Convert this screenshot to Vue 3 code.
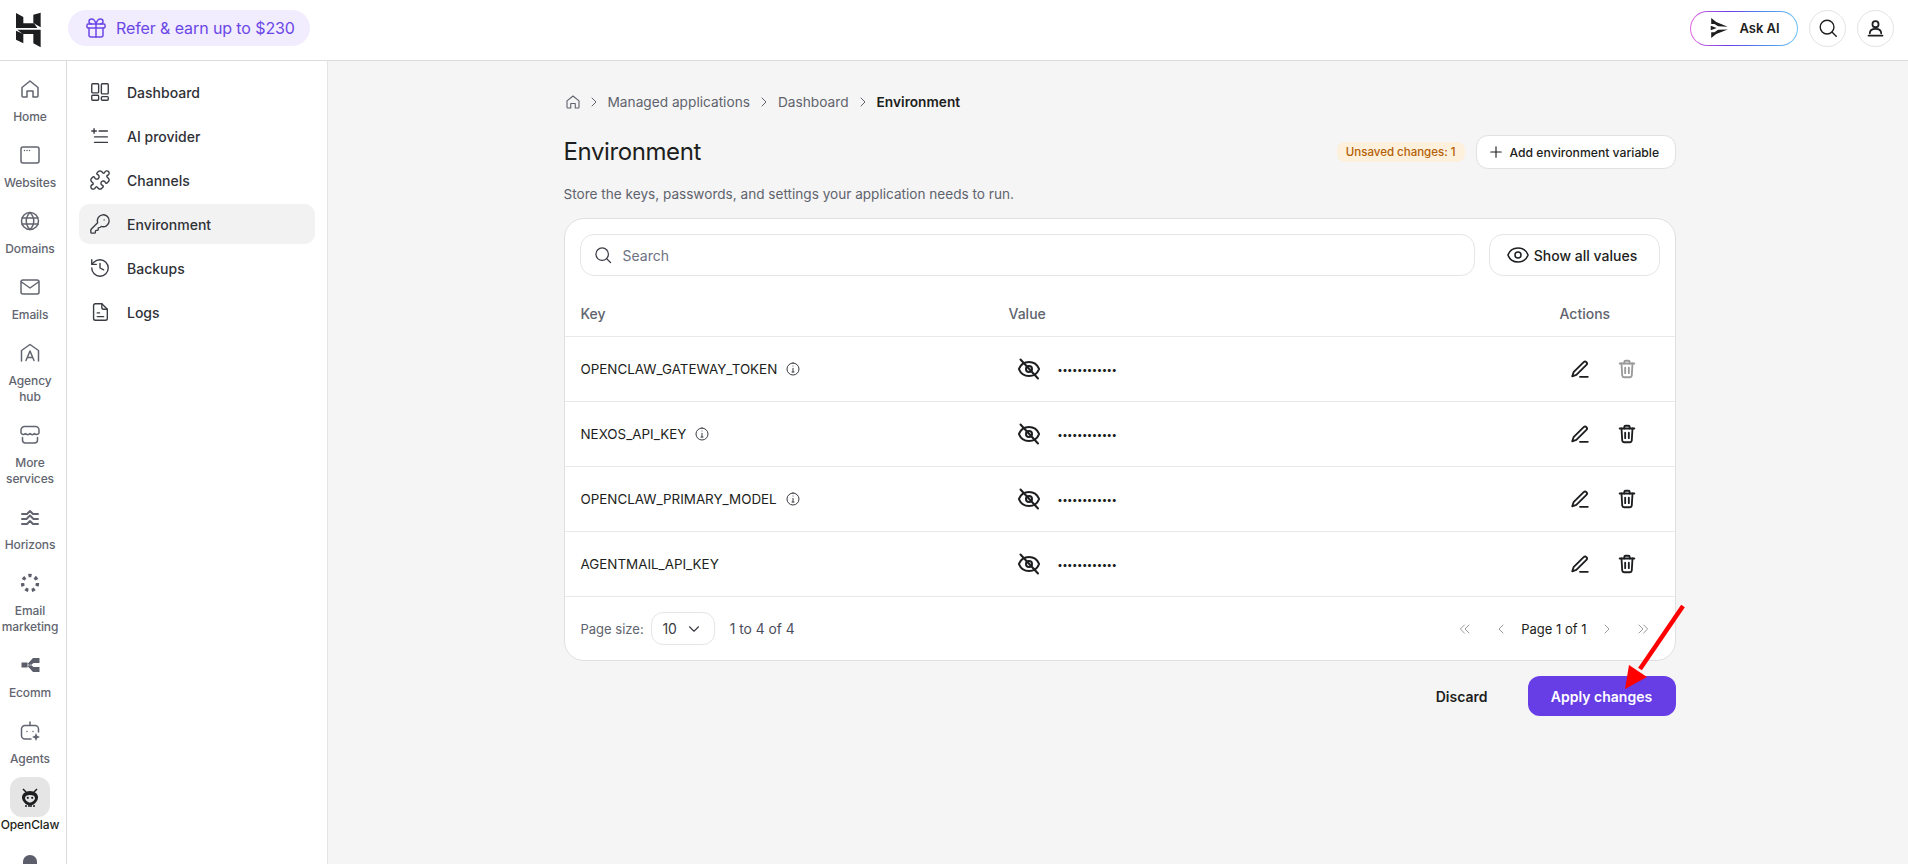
<script setup>
import { ref } from 'vue';

// icon shapes, all on a 24 box
const icons = {
  home: ['M4 10.5 12 4l8 6.5V19a1 1 0 0 1-1 1h-4v-6H9v6H5a1 1 0 0 1-1-1z'],
  websites: ['M5 4h14a2 2 0 0 1 2 2v12a2 2 0 0 1-2 2H5a2 2 0 0 1-2-2V6a2 2 0 0 1 2-2z', 'M6.5 7.5h.01M9 7.5h.01M11.5 7.5h.01'],
  domains: ['M12 3.5a8.5 8.5 0 1 0 0 17 8.5 8.5 0 0 0 0-17z', 'M12 3.5c-5 5-5 12 0 17c5-5 5-12 0-17z', 'M4 9h16M4 15h16'],
  emails: ['M5 5h14a2 2 0 0 1 2 2v10a2 2 0 0 1-2 2H5a2 2 0 0 1-2-2V7a2 2 0 0 1 2-2z', 'm3.5 7 8.5 6 8.5-6'],
  agency: ['M3.5 20V9.5L12 3.5l8.500 6V20', 'M8 19.5 12 10l4 9.500M9.500 16.500h5'],
  services: ['M6.500 3.500h11a3.500 3.500 0 0 1 3.500 3.500v3c-1 2-3.500 2-4.500.5-1 1.500-3.500 1.500-4.500 0-1 1.500-3.500 1.500-4.500 0C6.500 12 4 12 3 10V7a3.500 3.500 0 0 1 3.500-3.500z', 'M4.500 14.500V17a3 3 0 0 0 3 3h9a3 3 0 0 0 3-3v-2.500'],
  horizons: ['M4 9h5l3-3 3 3h5', 'M4 14h4.500l3.500-3.500 3.500 3.500H20', 'M4 19h5l3-3 3 3h5'],
  agents: ['M7 6.500h10a3.500 3.500 0 0 1 3.500 3.500v3M13 20H7a3.500 3.500 0 0 1-3.500-3.500V10A3.500 3.500 0 0 1 7 6.500', 'M12 6.500V3', 'M9 12.500h.01M15 12.500h.01'],
  dashboard: ['M4 3h5.500a1 1 0 0 1 1 1v8a1 1 0 0 1-1 1H4a1 1 0 0 1-1-1V4a1 1 0 0 1 1-1z', 'M14.500 3H20a1 1 0 0 1 1 1v9a1 1 0 0 1-1 1h-5.500a1 1 0 0 1-1-1V4a1 1 0 0 1 1-1z', 'M4 15.500h5.500a1 1 0 0 1 1 1V20a1 1 0 0 1-1 1H4a1 1 0 0 1-1-1v-3.500a1 1 0 0 1 1-1z', 'M14.500 17H20a1 1 0 0 1 1 1v2a1 1 0 0 1-1 1h-5.500a1 1 0 0 1-1-1v-2a1 1 0 0 1 1-1z'],
  provider: ['M3 6.500h5M5.500 4v5', 'M11 6.500h9M6 13h14M6 19h14'],
  channels: ['M19.439 7.85c-.049.322.059.648.289.878l1.568 1.568c.47.47.706 1.087.706 1.704s-.235 1.233-.706 1.704l-1.611 1.611a.98.98 0 0 1-.837.276c-.47-.07-.802-.48-.968-.925a2.501 2.501 0 1 0-3.214 3.214c.446.166.855.497.925.968a.979.979 0 0 1-.276.837l-1.61 1.61a2.404 2.404 0 0 1-1.705.707 2.402 2.402 0 0 1-1.704-.706l-1.568-1.568a1.026 1.026 0 0 0-.877-.29c-.493.074-.84.504-1.02.968a2.5 2.5 0 1 1-3.237-3.237c.464-.18.894-.527.967-1.02a1.026 1.026 0 0 0-.289-.877l-1.568-1.568A2.402 2.402 0 0 1 1.998 12c0-.617.236-1.234.706-1.704L4.23 8.77c.24-.24.581-.353.917-.303.515.077.877.528 1.073 1.01a2.5 2.5 0 1 0 3.259-3.259c-.482-.196-.933-.558-1.01-1.073-.05-.336.062-.676.303-.917l1.525-1.525A2.402 2.402 0 0 1 12 1.998c.617 0 1.234.236 1.704.706l1.568 1.568c.23.23.556.338.877.29.493-.074.84-.504 1.02-.968a2.5 2.5 0 1 1 3.237 3.237c-.464.18-.894.527-.967 1.02Z'],
  key: ['M2.586 17.414A2 2 0 0 0 2 18.828V21a1 1 0 0 0 1 1h3a1 1 0 0 0 1-1v-1a1 1 0 0 1 1-1h1a1 1 0 0 0 1-1v-1a1 1 0 0 1 1-1h.172a2 2 0 0 0 1.414-.586l.814-.814a6.5 6.5 0 1 0-4-4z', 'M16.500 7.500h.01'],
  backups: ['M3 12a9 9 0 1 0 9-9 9.750 9.750 0 0 0-6.740 2.740L3 8', 'M3 3v5h5', 'M12 7v5l4 2'],
  logs: ['M7 3h7l6 6v10a2 2 0 0 1-2 2H7a2 2 0 0 1-2-2V5a2 2 0 0 1 2-2z', 'M14 3v4a2 2 0 0 0 2 2h4', 'M9 13h2.500M9 17h7'],
  gift: ['M4 8h16a1 1 0 0 1 1 1v2a1 1 0 0 1-1 1H4a1 1 0 0 1-1-1V9a1 1 0 0 1 1-1z', 'M12 8v13', 'M19 12v7a2 2 0 0 1-2 2H7a2 2 0 0 1-2-2v-7', 'M7.500 8a2.500 2.500 0 0 1 0-5A4.800 8 0 0 1 12 8a4.800 8 0 0 1 4.500-5 2.500 2.500 0 0 1 0 5'],
  search: ['M11 3.500a7.500 7.500 0 1 0 0 15 7.500 7.500 0 0 0 0-15z', 'm21 21-4.700-4.700'],
  user: ['M12 3.500a3.500 3.500 0 1 0 0 7 3.500 3.500 0 0 0 0-7z', 'M5.500 17.500c0-3.500 3-5 6.500-5s6.500 1.500 6.500 5', 'M4 20h16'],
  plus: ['M12 5v14M5 12h14'],
  eye: ['M2.062 12.348a1 1 0 0 1 0-.696 10.750 10.750 0 0 1 19.876 0 1 1 0 0 1 0 .696 10.750 10.750 0 0 1-19.876 0', 'M12 9a3 3 0 1 0 0 6 3 3 0 0 0 0-6z'],
  eyeOff: ['M2.062 12.348a1 1 0 0 1 0-.696 10.750 10.750 0 0 1 19.876 0 1 1 0 0 1 0 .696 10.750 10.750 0 0 1-19.876 0', 'M12 9a3 3 0 1 0 0 6 3 3 0 0 0 0-6z', 'M3.500 2.500l17.500 19'],
  pencil: ['M16 4.500a2.100 2.100 0 0 1 3 3L8 18.500l-4.500 1.500 1.500-4.500z', 'M12 20.500h8.500'],
  trash: ['M4 6h16', 'M9 6V4.500A1.500 1.500 0 0 1 10.500 3h3A1.500 1.500 0 0 1 15 4.500V6', 'M6 6l.8 13.200A2 2 0 0 0 8.800 21h6.400a2 2 0 0 0 2-1.800L18 6', 'M10 10.500v6M14 10.500v6'],
  info: ['M12 3a9 9 0 1 0 0 18 9 9 0 0 0 0-18z', 'M12 11v5.500M10.500 16.500h3M12 7.500h.01'],
  chevronDown: ['m6 9 6 6 6-6'],
  chevronRight: ['m9 6 6 6-6 6'],
  chevronLeft: ['m15 6-6 6 6 6'],
  doubleLeft: ['m11 6-6 6 6 6', 'm18 6-6 6 6 6'],
  doubleRight: ['m6 6 6 6-6 6', 'm13 6 6 6-6 6'],
};

const railItems = [
  { label: 'Home', icon: 'home' },
  { label: 'Websites', icon: 'websites' },
  { label: 'Domains', icon: 'domains' },
  { label: 'Emails', icon: 'emails' },
  { label: 'Agency\nhub', icon: 'agency' },
  { label: 'More\nservices', icon: 'services' },
  { label: 'Horizons', icon: 'horizons' },
  { label: 'Email\nmarketing', icon: 'marketing' },
  { label: 'Ecomm', icon: 'ecomm' },
  { label: 'Agents', icon: 'agents' },
  { label: 'OpenClaw', icon: 'claw', active: true },
];

const subItems = [
  { label: 'Dashboard', icon: 'dashboard' },
  { label: 'AI provider', icon: 'provider' },
  { label: 'Channels', icon: 'channels' },
  { label: 'Environment', icon: 'key', active: true },
  { label: 'Backups', icon: 'backups' },
  { label: 'Logs', icon: 'logs' },
];

const rows = ref([
  { name: 'OPENCLAW_GATEWAY_TOKEN', info: true, locked: true },
  { name: 'NEXOS_API_KEY', info: true },
  { name: 'OPENCLAW_PRIMARY_MODEL', info: true },
  { name: 'AGENTMAIL_API_KEY' },
]);
</script>

<template>
  <div class="app">
    <header class="topbar">
      <div class="logo">
        <svg width="40" height="40" viewBox="0 0 120 120" fill="#1d1e20">
          <path d="M18 15 40 27V46H72L82 60H18z" />
          <path d="M70 20 92 14V58L70 45z" />
          <path d="M18 68 40 78V106L18 95z" />
          <path d="M22 65H92V118L70 106V78H38z" />
        </svg>
      </div>
      <div class="refer">
        <svg class="ico" width="24" height="24" viewBox="0 0 24 24">
          <path v-for="d in icons.gift" :key="d" :d="d" />
        </svg>
        <span>Refer &amp; earn up to $230</span>
      </div>
      <div class="top-right">
        <div class="ask">
          <svg width="22" height="24" viewBox="0 0 24 24" fill="#1d1e20">
            <path d="M3.500 1 9 5.500 21.500 10.500 11 10 7 7.500 3.500 7.500z" />
            <path d="M3.500 23 9 18.500 21.500 13.500 11 14 7 16.500 3.500 16.500z" />
            <path d="M3 9.500 9.500 12 3 14.500z" />
          </svg>
          <span>Ask AI</span>
        </div>
        <div class="round">
          <svg class="ico" width="22" height="22" viewBox="0 0 24 24">
            <path v-for="d in icons.search" :key="d" :d="d" />
          </svg>
        </div>
        <div class="round">
          <svg class="ico thick" width="21" height="21" viewBox="0 0 24 24">
            <path v-for="d in icons.user" :key="d" :d="d" />
          </svg>
        </div>
      </div>
    </header>

    <div class="body">
      <nav class="rail">
        <div v-for="item in railItems" :key="item.label" class="rail-item" :class="{ active: item.active }">
          <div class="rail-icon">
            <svg v-if="item.icon === 'marketing'" width="24" height="24" viewBox="0 0 24 24" fill="none">
              <circle cx="12" cy="12" r="7.500" stroke="#5c5f6b" stroke-width="3.400" stroke-dasharray="3.200 3.500" />
            </svg>
            <svg v-else-if="item.icon === 'ecomm'" width="24" height="24" viewBox="0 0 24 24" fill="#5c5f6b">
              <path d="M3.500 9.500h6v5h-6zM9.500 11 15 5h6.500v5h-6l-3 2.500zM9.500 13l5.500 6h6.500v-5h-6l-3-2.500z" />
            </svg>
            <svg v-else-if="item.icon === 'claw'" width="24" height="24" viewBox="0 0 24 24" fill="none">
              <path d="M5 4l3 3M19 4l-3 3M8 20v2M11 20v2M13 20v2M16 20v2" stroke="#1d1e20" stroke-width="1.500" />
              <path d="M12 6c5 0 8 3 8 6.500S16 20.500 12 20.500 4 16 4 12.500 7 6 12 6z" fill="#1d1e20" />
              <path d="M12 10c3 0 5 1 5 3s-2.500 4.500-5 4.500S7 15 7 13s2-3 5-3z" fill="#e5e5e5" />
              <circle cx="9.800" cy="12.800" r="1.100" fill="#1d1e20" />
              <circle cx="14.200" cy="12.800" r="1.100" fill="#1d1e20" />
            </svg>
            <svg v-else-if="item.icon === 'agents'" class="ico" width="24" height="24" viewBox="0 0 24 24">
              <path v-for="d in icons.agents" :key="d" :d="d" />
              <path class="solid" d="M18 14l1.200 2.800L22 18l-2.800 1.200L18 22l-1.200-2.800L14 18l2.800-1.200z" />
            </svg>
            <svg v-else class="ico" :class="{ thick: item.icon === 'horizons' }" width="24" height="24" viewBox="0 0 24 24">
              <path v-for="d in icons[item.icon]" :key="d" :d="d" />
            </svg>
          </div>
          <span class="rail-label">{{ item.label }}</span>
        </div>
        <div class="rail-item">
          <div class="rail-icon">
            <svg width="24" height="24" viewBox="0 0 24 24" fill="#5c5f6b">
              <path d="M12 4c4 0 7 3 7 7v9H5v-9c0-4 3-7 7-7z" />
            </svg>
          </div>
        </div>
      </nav>

      <aside class="subnav">
        <div v-for="item in subItems" :key="item.label" class="sub-item" :class="{ active: item.active }">
          <svg class="ico" width="22" height="22" viewBox="0 0 24 24">
            <path v-for="d in icons[item.icon]" :key="d" :d="d" />
          </svg>
          <span>{{ item.label }}</span>
        </div>
      </aside>

      <main class="main">
        <div class="content">
          <div class="crumbs">
            <svg class="ico home-ico" width="18" height="18" viewBox="0 0 24 24">
              <path v-for="d in icons.home" :key="d" :d="d" />
            </svg>
            <svg class="ico" width="16" height="16" viewBox="0 0 24 24">
              <path v-for="d in icons.chevronRight" :key="d" :d="d" />
            </svg>
            <span>Managed applications</span>
            <svg class="ico" width="16" height="16" viewBox="0 0 24 24">
              <path v-for="d in icons.chevronRight" :key="d" :d="d" />
            </svg>
            <span>Dashboard</span>
            <svg class="ico" width="16" height="16" viewBox="0 0 24 24">
              <path v-for="d in icons.chevronRight" :key="d" :d="d" />
            </svg>
            <span class="current">Environment</span>
          </div>

          <div class="title-row">
            <h1>Environment</h1>
            <span class="badge">Unsaved changes: 1</span>
            <button class="add-btn">
              <svg class="ico" width="18" height="18" viewBox="0 0 24 24">
                <path v-for="d in icons.plus" :key="d" :d="d" />
              </svg>
              Add environment variable
            </button>
          </div>
          <p class="desc">Store the keys, passwords, and settings your application needs to run.</p>

          <section class="card">
            <div class="tools">
              <div class="search">
                <svg class="ico" width="20" height="20" viewBox="0 0 24 24">
                  <path v-for="d in icons.search" :key="d" :d="d" />
                </svg>
                <span>Search</span>
              </div>
              <button class="show-btn">
                <svg class="ico" width="24" height="24" viewBox="0 0 24 24">
                  <path v-for="d in icons.eye" :key="d" :d="d" />
                </svg>
                Show all values
              </button>
            </div>

            <div class="row head">
              <div>Key</div>
              <div>Value</div>
              <div>Actions</div>
            </div>
            <div v-for="row in rows" :key="row.name" class="row">
              <div class="key">
                {{ row.name }}
                <svg v-if="row.info" class="ico info" width="16" height="16" viewBox="0 0 24 24">
                  <path v-for="d in icons.info" :key="d" :d="d" />
                </svg>
              </div>
              <div class="value">
                <svg class="ico thick" width="24" height="24" viewBox="0 0 24 24">
                  <path v-for="d in icons.eyeOff" :key="d" :d="d" />
                </svg>
                <span class="dots">••••••••••••</span>
              </div>
              <div class="actions">
                <svg class="ico thick" width="22" height="22" viewBox="0 0 24 24">
                  <path v-for="d in icons.pencil" :key="d" :d="d" />
                </svg>
                <svg class="ico thick" :class="{ locked: row.locked }" width="22" height="22" viewBox="0 0 24 24">
                  <path v-for="d in icons.trash" :key="d" :d="d" />
                </svg>
              </div>
            </div>

            <div class="pager-row">
              <span class="muted">Page size:</span>
              <div class="select">
                10
                <svg class="ico" width="18" height="18" viewBox="0 0 24 24">
                  <path v-for="d in icons.chevronDown" :key="d" :d="d" />
                </svg>
              </div>
              <span class="count">1 to 4 of 4</span>
              <div class="pager">
                <svg class="ico" width="16" height="16" viewBox="0 0 24 24">
                  <path v-for="d in icons.doubleLeft" :key="d" :d="d" />
                </svg>
                <svg class="ico" width="16" height="16" viewBox="0 0 24 24">
                  <path v-for="d in icons.chevronLeft" :key="d" :d="d" />
                </svg>
                <span>Page 1 of 1</span>
                <svg class="ico" width="16" height="16" viewBox="0 0 24 24">
                  <path v-for="d in icons.chevronRight" :key="d" :d="d" />
                </svg>
                <svg class="ico" width="16" height="16" viewBox="0 0 24 24">
                  <path v-for="d in icons.doubleRight" :key="d" :d="d" />
                </svg>
              </div>
            </div>
          </section>

          <div class="foot">
            <button class="discard">Discard</button>
            <button class="apply">Apply changes</button>
          </div>
        </div>
      </main>
    </div>

    <!-- annotation drawn over the page -->
    <svg class="arrow" width="80" height="100" viewBox="0 0 80 100">
      <path d="M69 6 26 69" stroke="#f00" stroke-width="4.500" />
      <path d="M11 89 15 65 33 77z" fill="#f00" />
    </svg>
  </div>
</template>

<style>
html, body {
  margin: 0;
  overflow: hidden;
}
</style>

<style scoped>
.app {
  height: 864px;
  overflow: hidden;
  position: relative;
  font-family: Inter, "Liberation Sans", sans-serif;
  color: #1d1e20;
  background: #fff;
}
.ico {
  fill: none;
  stroke: currentColor;
  stroke-width: 1.5;
  stroke-linecap: round;
  stroke-linejoin: round;
  flex-shrink: 0;
}
.ico .solid {
  fill: currentColor;
  stroke: none;
}
.thick {
  stroke-width: 2;
}

.topbar {
  height: 60px;
  border-bottom: 1px solid #dcdcdc;
  display: flex;
  align-items: center;
  padding: 0 14px 0 10px;
}
.logo {
  display: flex;
  margin-top: -4px;
  margin-right: 18px;
}
.refer {
  height: 36px;
  width: 242px;
  box-sizing: border-box;
  margin-top: -4px;
  padding-left: 16px;
  border-radius: 18px;
  background: #f1edff;
  color: #6b47e6;
  display: flex;
  align-items: center;
  gap: 8px;
  font-size: 16px;
  letter-spacing: -0.1px;
}
.top-right {
  margin-left: auto;
  margin-top: -4px;
  display: flex;
  align-items: center;
  gap: 11px;
}
.ask {
  width: 108px;
  height: 35px;
  box-sizing: border-box;
  border: 1px solid transparent;
  border-radius: 18px;
  background: linear-gradient(#fff, #fff) padding-box, linear-gradient(90deg, #e56be0, #6b3de6 35%, #4a8ef0 70%, #6cc4f5) border-box;
  display: flex;
  align-items: center;
  justify-content: center;
  gap: 9px;
  font-size: 13px;
  font-weight: 600;
}
.round {
  width: 37px;
  height: 37px;
  box-sizing: border-box;
  border: 1px solid #e3e3e3;
  border-radius: 50%;
  display: flex;
  align-items: center;
  justify-content: center;
}

.body {
  display: flex;
  height: 803px;
}
.rail {
  width: 67px;
  flex-shrink: 0;
  box-sizing: border-box;
  border-right: 1px solid #dcdcdc;
  padding-top: 8px;
  overflow: hidden;
}
.rail-item {
  width: 60px;
  display: flex;
  flex-direction: column;
  align-items: center;
  margin-bottom: 10px;
  font-size: 12px;
  font-weight: 500;
  line-height: 16px;
  color: #62656f;
  text-align: center;
  letter-spacing: -0.1px;
}
.rail-label {
  white-space: pre-line;
}
.rail-icon {
  width: 40px;
  height: 40px;
  flex-shrink: 0;
  display: flex;
  align-items: center;
  justify-content: center;
  border-radius: 12px;
}
.rail-item.active {
  color: #1d1e20;
}
.rail-item.active .rail-icon {
  background: #e5e5e5;
}

.subnav {
  width: 261px;
  flex-shrink: 0;
  box-sizing: border-box;
  border-right: 1px solid #e4e4e4;
  padding: 11px 12px 0 12px;
}
.sub-item {
  height: 40px;
  margin-bottom: 4px;
  border-radius: 10px;
  padding-left: 10px;
  display: flex;
  align-items: center;
  gap: 16px;
  font-size: 14px;
  font-weight: 500;
  color: #2f3137;
}
.sub-item.active {
  background: #f2f2f2;
}
.sub-item .ico {
  color: #3a3c44;
}

.main {
  flex: 1;
  background: #f5f5f5;
  padding-left: 3px;
  display: flex;
  justify-content: center;
}
.content {
  width: 1112px;
  padding-top: 30px;
}
.crumbs {
  height: 22px;
  display: flex;
  align-items: center;
  gap: 6px;
  font-size: 13.7px;
  color: #60636d;
}
.crumbs .home-ico {
  margin-right: -2px;
}
.crumbs .current {
  color: #1d1e20;
  font-weight: 600;
}
.title-row {
  display: flex;
  align-items: center;
  height: 34px;
  margin-top: 22px;
}
h1 {
  margin: -2px auto 0 0;
  font-size: 24px;
  font-weight: 400;
  letter-spacing: -0.4px;
}
.badge {
  height: 20px;
  padding: 0 9px;
  border-radius: 8px;
  background: #fdf0dc;
  color: #b45f06;
  font-size: 11.5px;
  font-weight: 500;
  line-height: 20px;
  margin-right: 11px;
}
button {
  font-family: inherit;
  color: inherit;
}
.add-btn {
  width: 200px;
  height: 34px;
  box-sizing: border-box;
  border: 1px solid #e1e1e1;
  border-radius: 12px;
  background: #fff;
  display: flex;
  align-items: center;
  gap: 5px;
  font-size: 12.2px;
  font-weight: 500;
  white-space: nowrap;
  padding: 0 0 0 10px;
}
.desc {
  margin: 15px 0 0;
  height: 20px;
  line-height: 20px;
  font-size: 13.6px;
  color: #60636d;
}
.card {
  margin-top: 14px;
  border: 1px solid #e0e0e0;
  border-radius: 20px;
  background: #fff;
}
.tools {
  display: flex;
  gap: 14px;
  padding: 15px 15px 15px 15px;
}
.search {
  flex: 1;
  height: 42px;
  box-sizing: border-box;
  border: 1px solid #e5e5e5;
  border-radius: 14px;
  display: flex;
  align-items: center;
  gap: 10px;
  padding-left: 12px;
  font-size: 14px;
  color: #6d7081;
}
.search .ico {
  color: #3a3c44;
}
.show-btn {
  width: 171px;
  height: 42px;
  box-sizing: border-box;
  border: 1px solid #e5e5e5;
  border-radius: 14px;
  background: #fff;
  display: flex;
  align-items: center;
  justify-content: center;
  gap: 4px;
  font-size: 14px;
  font-weight: 500;
  padding: 0 5px 0 0;
}
.row {
  display: grid;
  grid-template-columns: 428px 1fr 115px;
  align-items: center;
  box-sizing: border-box;
  height: 65px;
  padding-left: 16px;
  border-top: 1px solid #e8e8e8;
  font-size: 13.4px;
}
.row.head {
  height: 46px;
  border-top: 0;
  font-size: 14px;
  font-weight: 500;
  color: #60636d;
  border-bottom: 1px solid #e8e8e8;
  margin-bottom: -1px;
}
.key {
  display: flex;
  align-items: center;
  gap: 8px;
}
.info {
  color: #3a3c44;
}
.value {
  display: flex;
  align-items: center;
  gap: 17px;
  padding-left: 8px;
}
.dots {
  font-size: 9.8px;
  font-weight: 600;
  color: #1d1e20;
}
.actions {
  display: flex;
  align-items: center;
  gap: 25px;
  padding-left: 9px;
}
.locked {
  color: #9a9a9a;
}
.pager-row {
  box-sizing: border-box;
  height: 64px;
  border-top: 1px solid #e8e8e8;
  display: flex;
  align-items: center;
  padding: 0 16px;
  font-size: 13px;
}
.muted {
  color: #60636d;
}
.select {
  width: 64px;
  height: 33px;
  box-sizing: border-box;
  margin-left: 7px;
  border: 1px solid #e5e5e5;
  border-radius: 12px;
  display: flex;
  align-items: center;
  justify-content: center;
  gap: 8px;
  font-size: 14px;
  color: #3a3c44;
}
.count {
  margin-left: 15px;
  font-size: 13.8px;
  color: #4a4d5c;
}
.pager {
  margin-left: auto;
  display: flex;
  align-items: center;
  color: #1d1e20;
  gap: 12px;
  margin-right: 8px;
}
.pager .ico {
  color: #9a9a9a;
}
.pager .ico:first-child {
  margin-right: 8px;
}
.pager .ico:last-child {
  margin-left: 8px;
}
.foot {
  display: flex;
  justify-content: flex-end;
  align-items: center;
  margin-top: 15px;
}
.discard {
  border: 0;
  background: none;
  font-size: 14px;
  font-weight: 600;
  padding: 0;
  margin-right: 40px;
}
.apply {
  width: 148px;
  height: 40px;
  border: 0;
  border-radius: 12px;
  background: #673de6;
  color: #fff;
  font-size: 14px;
  font-weight: 600;
  padding: 0;
}
.arrow {
  position: absolute;
  left: 1614px;
  top: 600px;
}
</style>
